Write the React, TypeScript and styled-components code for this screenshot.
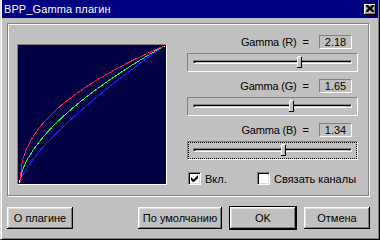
import styled, { createGlobalStyle } from "styled-components";

const GlobalStyle = createGlobalStyle`
  html, body {
    margin: 0;
    padding: 0;
    background: #c0c0c0;
  }
  body {
    font-family: "Liberation Sans", Arial, sans-serif;
    font-size: 11px;
    color: #000;
  }
`;

const channels = [
  { name: "R", gamma: 2.18, thumb: 104, color: "#ff1048" },
  { name: "G", gamma: 1.65, thumb: 96, color: "#10ff40" },
  { name: "B", gamma: 1.34, thumb: 88, color: "#2020ff" },
];

const PLOT_W = 148;
const PLOT_H = 139;

// gamma curve y = x^(1/g), in plot pixels
const curve = (g: number) => {
  const pts: string[] = [];
  for (let i = 0; i <= 72; i++) {
    const x = i / 72;
    const y = Math.pow(x, 1 / g);
    pts.push(`${(2 + x * 144).toFixed(1)},${(137 - y * 136).toFixed(1)}`);
  }
  return pts.join(" ");
};

const App = () => {
  return (
    <>
      <GlobalStyle />
      <Window>
        <TitleBar>
          <Title>BPP_Gamma плагин</Title>
          <CloseBtn>
            <svg width="8" height="7" viewBox="0 0 8 7">
              <path d="M0 0h2l2 2 2-2h2v1L6 3.5 8 6v1H6L4 5 2 7H0V6l2-2.5L0 1z" fill="#000" />
            </svg>
          </CloseBtn>
        </TitleBar>
        <Body>
          <Panel>
            <Plot>
              <svg width={PLOT_W} height={PLOT_H} viewBox={`0 0 ${PLOT_W} ${PLOT_H}`}>
                {channels
                  .slice()
                  .reverse()
                  .map((c) => (
                    <polyline
                      key={c.name}
                      points={curve(c.gamma)}
                      fill="none"
                      stroke={c.color}
                      strokeWidth={1}
                      shapeRendering="crispEdges"
                    />
                  ))}
                <rect x={1} y={135} width={1} height={3} fill="#fff" />
                <rect x={146} y={1} width={1} height={1} fill="#fff" />
              </svg>
            </Plot>
            <Controls>
              {channels.map((c, i) => (
                <div key={c.name}>
                  <ValueRow>
                    <Label>Gamma ({c.name})</Label>
                    <Equals>=</Equals>
                    <ValueBox>{c.gamma.toFixed(2)}</ValueBox>
                  </ValueRow>
                  <Slider $focused={i === 2}>
                    <Track />
                    <Thumb style={{ left: 5 + c.thumb }} />
                  </Slider>
                </div>
              ))}
              <CheckRow>
                <CheckItem $width={69}>
                  <CheckBox>
                    <svg width="7" height="7" viewBox="0 0 7 7">
                      <path d="M0 2v3l2 2h1l4-4V0L2.5 4.5z" fill="#000" />
                    </svg>
                  </CheckBox>
                  Вкл.
                </CheckItem>
                <CheckItem>
                  <CheckBox />
                  Связать каналы
                </CheckItem>
              </CheckRow>
            </Controls>
          </Panel>
          <ButtonRow>
            <Button>О плагине</Button>
            <ButtonGroup>
              <Button $width={84}>По умолчанию</Button>
              <Button $default>OK</Button>
              <Button>Отмена</Button>
            </ButtonGroup>
          </ButtonRow>
        </Body>
      </Window>
    </>
  );
};

const Window = styled.div`
  box-sizing: border-box;
  width: 380px;
  height: 242px;
  margin-top: -2px;
  padding: 1px;
  background: #c0c0c0;
  border-top: 1px solid #dfdfdf;
  border-left: 1px solid #dfdfdf;
  border-right: 1px solid #000;
  border-bottom: 1px solid #000;
  box-shadow: inset 1px 1px 0 #fff, inset -1px -1px 0 #808080;
  display: flex;
  flex-direction: column;
`;

const TitleBar = styled.div`
  height: 18px;
  background: #000080;
  color: #fff;
  display: flex;
  align-items: center;
  justify-content: space-between;
  padding: 0 2px 0 2px;
`;

const Title = styled.span`
  font-size: 11px;
  letter-spacing: 0.1px;
`;

const CloseBtn = styled.div`
  box-sizing: border-box;
  width: 12px;
  height: 11px;
  background: #c0c0c0;
  box-shadow: inset -1px -1px 0 #000, inset 1px 1px 0 #fff, inset -2px -2px 0 #808080;
  display: flex;
  align-items: center;
  justify-content: center;
  padding: 0 1px 1px 0;
`;

const Body = styled.div`
  padding: 5px 0 0 5px;
  display: flex;
  flex-direction: column;
`;

const Panel = styled.div`
  box-sizing: border-box;
  width: 362px;
  height: 173px;
  border: 1px solid #808080;
  box-shadow: inset 1px 1px 0 #fff, 1px 1px 0 #fff;
  padding: 11px 0 0 9px;
  display: flex;
  align-items: flex-start;
  gap: 20px;
`;

const Plot = styled.div`
  box-sizing: border-box;
  width: 150px;
  height: 141px;
  margin-top: 9px;
  background: #000042;
  border-top: 1px solid #808080;
  border-left: 1px solid #808080;
  border-right: 1px solid #fff;
  border-bottom: 1px solid #fff;
  svg {
    display: block;
  }
`;

const Controls = styled.div`
  width: 171px;
  display: flex;
  flex-direction: column;
`;

const ValueRow = styled.div`
  height: 14px;
  padding-right: 6px;
  display: flex;
  align-items: center;
  justify-content: flex-end;
`;

const Label = styled.span`
  font-size: 11px;
  letter-spacing: -0.2px;
`;

const Equals = styled.span`
  margin: 0 10px 0 6px;
`;

const ValueBox = styled.div`
  box-sizing: border-box;
  width: 33px;
  height: 14px;
  border-top: 1px solid #808080;
  border-left: 1px solid #808080;
  border-right: 1px solid #fff;
  border-bottom: 1px solid #fff;
  text-align: center;
  line-height: 12px;
  font-size: 11px;
`;

const Slider = styled.div<{ $focused?: boolean }>`
  position: relative;
  box-sizing: border-box;
  height: 19px;
  margin: 4px 0 7px;
  border-top: 1px solid #808080;
  border-left: 1px solid #808080;
  border-right: 1px solid #fff;
  border-bottom: 1px solid #fff;
  padding: 6px 5px 0 5px;
  outline: ${(p) => (p.$focused ? "1px dotted #000" : "none")};
  outline-offset: -2px;
`;

const Track = styled.div`
  box-sizing: border-box;
  height: 4px;
  border-top: 1px solid #808080;
  border-left: 1px solid #808080;
  border-bottom: 1px solid #fff;
  border-right: 1px solid #fff;
  box-shadow: inset 0 1px 0 #000, inset 1px 0 0 #000;
`;

const Thumb = styled.div`
  position: absolute;
  top: 2px;
  box-sizing: border-box;
  width: 5px;
  height: 12px;
  background: #c0c0c0;
  border-radius: 2px 2px 0 0;
  box-shadow: inset -1px -1px 0 #000, inset 1px 1px 0 #fff;
`;

const CheckRow = styled.div`
  display: flex;
  align-items: center;
  margin-top: 5px;
  padding-left: 1px;
`;

const CheckItem = styled.label<{ $width?: number }>`
  display: flex;
  align-items: center;
  gap: 4px;
  width: ${(p) => (p.$width ? `${p.$width}px` : "auto")};
  font-size: 11px;
`;

const CheckBox = styled.span`
  box-sizing: border-box;
  width: 13px;
  height: 13px;
  background: #fff;
  border-top: 1px solid #808080;
  border-left: 1px solid #808080;
  border-right: 1px solid #fff;
  border-bottom: 1px solid #fff;
  box-shadow: inset 1px 1px 0 #000, inset -1px -1px 0 #dfdfdf;
  display: flex;
  align-items: center;
  justify-content: center;
`;

const ButtonRow = styled.div`
  width: 363px;
  margin-top: 10px;
  display: flex;
  align-items: center;
`;

const ButtonGroup = styled.div`
  margin-left: auto;
  display: flex;
  align-items: center;
  gap: 7px;
`;

const Button = styled.button<{ $width?: number; $default?: boolean }>`
  box-sizing: content-box;
  width: ${(p) => (p.$width ? p.$width : 66)}px;
  height: 22px;
  padding: 0;
  margin: 0;
  background: #c0c0c0;
  font-family: "Liberation Sans", Arial, sans-serif;
  font-size: 11px;
  color: #000;
  border: ${(p) => (p.$default ? "1px solid #000" : "none")};
  box-shadow: inset -1px -1px 0 #000, inset 1px 1px 0 #fff, inset -2px -2px 0 #808080,
    inset 2px 2px 0 #dfdfdf;
`;

export default App;
